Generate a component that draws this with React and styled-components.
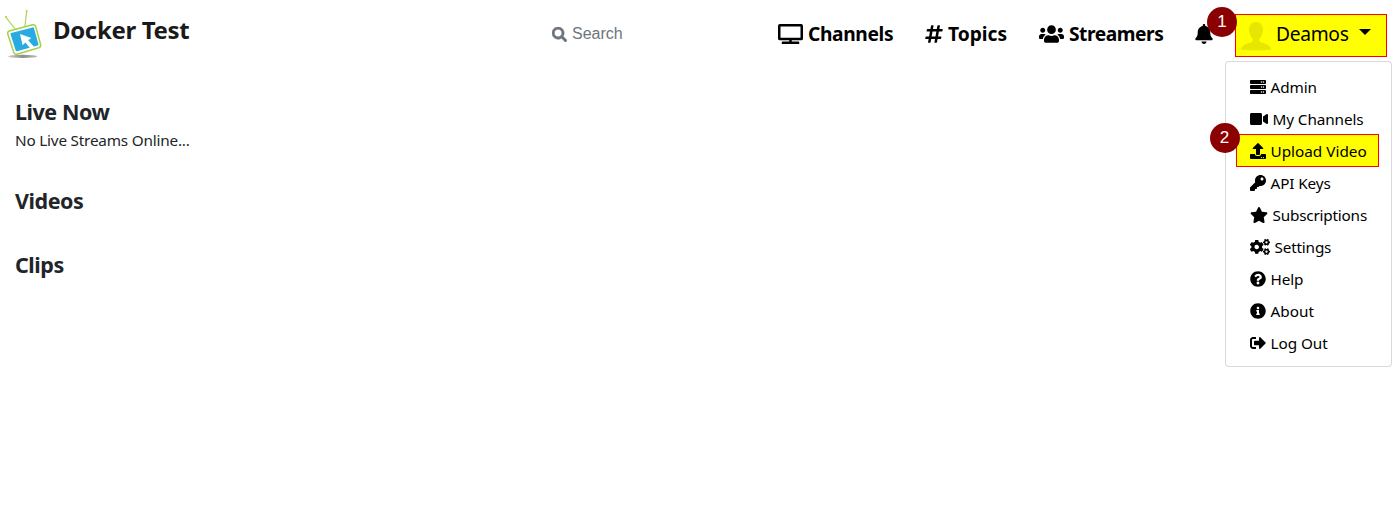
import React from 'react';
import styled, { createGlobalStyle } from 'styled-components';
import {
  FaSearch, FaTv, FaHashtag, FaUsers, FaBell, FaServer, FaVideo, FaUpload, FaKey,
  FaStar, FaCogs, FaQuestionCircle, FaInfoCircle, FaSignOutAlt,
} from 'react-icons/fa';

const GlobalStyle = createGlobalStyle`
  * { box-sizing: border-box; }
  body {
    margin: 0;
    background: #fff;
    color: #212529;
    font-family: "Segoe UI", "Noto Sans", sans-serif;
    font-size: 15.3px;
    line-height: 24px;
  }
`;

const Page = styled.div`
  position: relative;
  height: 516px;
  overflow: hidden;
`;

const Header = styled.header`
  display: flex;
  height: 70px;
  padding-left: 4px;
`;

const Brand = styled.a`
  display: flex;
  width: 548px;
  color: #1a1a1a;
`;

const Logo = styled.svg`
  width: 46px;
  height: 60px;
`;

const BrandName = styled.span`
  margin: 12px 0 0 3px;
  font-size: 24px;
  font-weight: 700;
  line-height: 36px;
  letter-spacing: -0.35px;
  white-space: nowrap;
`;

const Search = styled.div`
  display: flex;
  align-items: center;
  gap: 5px;
  width: 226px;
  height: 68px;
  color: #6c757d;
  font: 16px "Liberation Sans", Arial, sans-serif;
`;

const Nav = styled.nav`
  display: flex;
  height: 68px;
  align-items: center;
  color: #000;
`;

const NavItem = styled.a`
  display: flex;
  flex: none;
  align-items: center;
  gap: 5px;
  width: ${(p) => p.$width}px;
  font-size: 19.2px;
  font-weight: 700;
  letter-spacing: ${(p) => p.$track || 0}px;
  white-space: nowrap;
`;

const Glyph = styled.span`
  display: flex;
  flex: none;
  svg {
    display: block;
    width: ${(p) => p.$w}px;
    height: ${(p) => p.$h || 16}px;
    stroke: currentColor;
    stroke-width: ${(p) => p.$weight || 0};
  }
`;

const UserToggle = styled.button`
  display: flex;
  flex: none;
  align-items: center;
  width: 152px;
  height: 43px;
  margin-top: 3px;
  padding: 0 0 0 5px;
  border: 1px solid #f00;
  background: #ff0;
  color: #000;
  font: inherit;
  font-size: 19.2px;
`;

const Avatar = styled.svg`
  width: 30px;
  height: 30px;
  margin: 1px 5px 0 0;
  fill: #e6e600;
`;

const UserName = styled.span`
  width: 83px;
  margin-top: -3px;
  text-align: left;
  letter-spacing: -0.3px;
`;

const Caret = styled.span`
  margin-top: -8px;
  border: 6px solid transparent;
  border-top-color: #000;
  border-bottom: 0;
`;

const Menu = styled.div`
  position: absolute;
  top: 61px;
  left: 1225px;
  width: 167px;
  height: 306px;
  padding: 9px 0 8px 10px;
  border: 1px solid rgba(0, 0, 0, 0.15);
  border-radius: 4px;
  background: #fff;
`;

const MenuItem = styled.a`
  display: flex;
  align-items: center;
  gap: 4.5px;
  width: 143px;
  height: ${(p) => (p.$marked ? 33 : 32)}px;
  margin: ${(p) => (p.$marked ? '-1px 0 0' : '0')};
  padding-left: ${(p) => (p.$marked ? 13 : 14)}px;
  border: ${(p) => (p.$marked ? '1px solid #f00' : '0')};
  background: ${(p) => (p.$marked ? '#ff0' : 'transparent')};
  color: #000;
  letter-spacing: ${(p) => p.$track || 0}px;
  white-space: nowrap;
`;

const StepBadge = styled.span`
  position: absolute;
  left: ${(p) => p.$x}px;
  top: ${(p) => p.$y}px;
  width: 30px;
  height: 30px;
  border-radius: 50%;
  background: #8b0000;
  color: #fff;
  font: 17px/30px "Liberation Sans", Arial, sans-serif;
  text-align: center;
`;

const Main = styled.main`
  padding: 28px 15px 0;
`;

const Section = styled.section`
  margin-bottom: ${(p) => p.$gap}px;
`;

const Heading = styled.h2`
  margin: 0;
  font-size: 21.5px;
  font-weight: 700;
  line-height: 28px;
  letter-spacing: -0.45px;
`;

const Empty = styled.p`
  margin: 2px 0 0;
  letter-spacing: -0.2px;
`;

const menu = [
  { icon: FaServer, w: 16, text: 'Admin', track: -0.1 },
  { icon: FaVideo, w: 18, text: 'My Channels', track: -0.1 },
  { icon: FaUpload, w: 16, text: 'Upload Video', marked: true },
  { icon: FaKey, w: 16, text: 'API Keys', track: -0.12 },
  { icon: FaStar, w: 18, text: 'Subscriptions', track: -0.2 },
  { icon: FaCogs, w: 20, text: 'Settings', track: -0.18 },
  { icon: FaQuestionCircle, w: 16, text: 'Help', track: -0.1 },
  { icon: FaInfoCircle, w: 16, text: 'About' },
  { icon: FaSignOutAlt, w: 16, text: 'Log Out', track: -0.05 },
];

function TvLogo() {
  return (
    <Logo viewBox="4 0 46 60">
      <defs>
        <linearGradient id="shade" x1="0" x2="1">
          <stop offset="0" stopColor="#ccc" />
          <stop offset="0.5" stopColor="#8c8c8c" />
          <stop offset="1" stopColor="#bbb" />
        </linearGradient>
      </defs>
      <ellipse cx="22.7" cy="56.4" rx="14.5" ry="1.6" fill="url(#shade)" />
      <path d="M6 17.3L15.6 29.5M26.6 11.5L25 26" stroke="#a9d64f" strokeWidth="1.2" fill="none" />
      <circle cx="6" cy="17" r="1.1" fill="#a9d64f" />
      <circle cx="26.7" cy="11" r="1.1" fill="#a9d64f" />
      <path d="M10 30.8L32.5 24.8Q35 24.3 35.7 26.5L40.7 44.7Q41.2 47 38.8 47.8L17 54.2Q14.6 54.8 13.8 52.5L7.8 34Q7.2 31.5 10 30.8Z" fill="#fff" stroke="#a3d345" strokeWidth="1.5" />
      <path d="M11.2 33L32.6 27.4Q33.7 27.2 34 28.3L38.4 44.2Q38.6 45.2 37.6 45.5L17 51.3Q16 51.6 15.7 50.6L10.5 34.3Q10.2 33.2 11.2 33Z" fill="#29abe2" />
      <path d="M20 34L31.3 38L28.2 40.2L34 46.8L30.6 48.8L25.4 42.4L22.6 45.3Z" fill="#fff" />
    </Logo>
  );
}

export default function App() {
  return (
    <Page>
      <GlobalStyle />
      <Header>
        <Brand>
          <TvLogo />
          <BrandName>Docker Test</BrandName>
        </Brand>
        <Search>
          <Glyph $w={15} $h={15} $weight={18}><FaSearch /></Glyph>
          Search
        </Search>
        <Nav>
          <NavItem $width={147} $track={-0.35}><Glyph $w={25} $h={20}><FaTv /></Glyph>Channels</NavItem>
          <NavItem $width={114}><Glyph $w={18} $h={20}><FaHashtag /></Glyph>Topics</NavItem>
          <NavItem $width={156} $track={-0.45}><Glyph $w={25} $h={20}><FaUsers /></Glyph>Streamers</NavItem>
          <NavItem $width={40}><Glyph $w={18} $h={20}><FaBell /></Glyph></NavItem>
          <UserToggle>
            <Avatar viewBox="0 0 30 30">
              <path d="M15 1C10.8 1 8 4 8 8.6C8 12.3 9.4 15.8 11.5 17.5C12.3 18.6 11.8 20.5 10 21.3L4 23.5C1.5 24.6 .3 26.2 0 28.5Q7 29.5 15 29.5T30 28.5C29.7 26.2 28.5 24.6 26 23.5L20 21.3C18.2 20.5 17.7 18.6 18.5 17.5C20.6 15.8 22 12.3 22 8.6C22 4 19.2 1 15 1Z" />
            </Avatar>
            <UserName>Deamos</UserName>
            <Caret />
          </UserToggle>
        </Nav>
      </Header>
      <Main>
        <Section $gap={35}>
          <Heading>Live Now</Heading>
          <Empty>No Live Streams Online...</Empty>
        </Section>
        <Section $gap={36}><Heading>Videos</Heading></Section>
        <Section $gap={36}><Heading>Clips</Heading></Section>
      </Main>
      <Menu>
        {menu.map(({ icon: Icon, w, text, marked, track }) => (
          <MenuItem key={text} $marked={marked} $track={track}>
            <Glyph $w={w}><Icon /></Glyph>
            {text}
          </MenuItem>
        ))}
      </Menu>
      <StepBadge $x={1207} $y={7}>1</StepBadge>
      <StepBadge $x={1209.5} $y={122.5}>2</StepBadge>
    </Page>
  );
}
